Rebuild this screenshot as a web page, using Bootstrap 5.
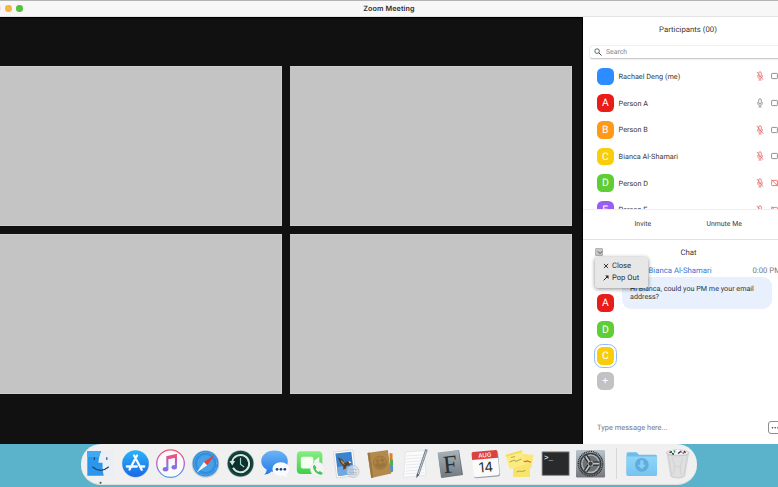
<!DOCTYPE html>
<html lang="en">
<head>
<meta charset="utf-8">
<meta name="viewport" content="width=device-width, initial-scale=1">
<title>Zoom Meeting</title>
<link href="https://cdn.jsdelivr.net/npm/bootstrap@5.3.0/dist/css/bootstrap.min.css" rel="stylesheet">
<style>
body{width:778px;height:487px;background:#5ab3cb;font-family:Roboto,"Liberation Sans",sans-serif;font-size:7.3px;line-height:9px;color:#3a3a3a;text-rendering:geometricPrecision}
svg{display:block;flex:none}
.title-bar{height:17px;background:#f7f7f7;border-top:1px solid #b4b4b4;border-bottom:1px solid #e4e4e4;font:600 7.2px/15px Inter,sans-serif;letter-spacing:.1px;color:#2d2d2d}
.dots{left:-6px;top:4px;gap:4.4px}
.dots span{width:6.6px;height:6.6px;border-radius:50%}
.window-body{height:426.5px}
.stage{width:583px;background:#111;border-top:1px solid #000;border-right:1px solid #000;padding:48px 10px 49px 0;display:grid;grid-template:160px 160px/282px 282px;gap:8px}
.stage div{background:#c4c4c4;border:1px solid #cecece;border-left:0}
.side{width:195px;background:#fff}
.people-head{height:28px;padding-top:8px;padding-left:15px;font-size:7.8px}
.search{height:14px;width:200px;margin:0 0 4px 6px;padding-left:4px;gap:4px;border-radius:4px;border:1px solid #f0f0f0;border-bottom-color:#ccc;box-shadow:0 1px 1px #0001;color:#888;font-size:6.9px}
.people{height:146.5px;border-bottom:1px solid #eee}
.person{height:26.7px;padding-left:13.5px;width:204px}
.person .who{width:142px;padding-left:4.5px}
.person .ms-2{margin-left:7px!important}
.ava{width:17.6px;height:17.6px;border-radius:5.5px;color:#fff;font-size:10.4px;line-height:18px;text-align:center;flex:none}
.c-blue{background:#2d8cff}.c-red{background:#e91c18}.c-orange{background:#ff9a16}.c-yellow{background:#f8ce0c}.c-green{background:#5fce35}.c-violet{background:#9b5cf6}.c-gray{background:#c2c2c2}
.muted{color:#e2605f}.live{color:#777}
.actions{height:30px;border-bottom:1px solid #e2e2e2;font-size:6.9px;padding-top:1px}
.actions .invite{margin-left:51.5px;width:72px}
.chat-head{height:25px;padding-left:11.5px;font-size:7.8px}
.toggle{width:8.5px;height:8px;background:#c9c9c9;border-radius:1px;border:.5px solid #b2b2b2}
.menu-pop{left:12px;top:17px;width:53px;height:31px;background:#e7e7e7;border-radius:3px;box-shadow:0 1px 4px #0007;padding:3px 0 0 8px;font-size:7.6px;line-height:12.4px;color:#2f2f2f;z-index:3}
.menu-pop div{gap:3px}
.contacts{width:35px;padding-left:13.5px;padding-top:29.5px}
.contacts .ava{margin-bottom:9.1px}
.ring{outline:1.2px solid #8fbcf5;outline-offset:2px}
.contacts .ring{margin-bottom:7px}
.thread{width:164px;padding-left:4px}
.from{height:12px;font-size:7.75px;line-height:12px;white-space:nowrap}
.from .sender{width:26.5px}
.from .name{color:#3873cf;width:104px}
.from .time{color:#777}
.bubble{width:150px;height:32px;background:#e8f0fd;border-radius:9px;padding:8px 0 0 8px;font-size:7.2px;line-height:8.4px;color:#30353b;white-space:nowrap}
.thread-area{height:149px}
.compose{height:28px;padding-left:14px;font-size:7.4px;letter-spacing:.04px;color:#777683}
.more{width:14px;height:13px;border:1px solid #8c8c8c;border-radius:3px;margin-right:-4px;line-height:12px;color:#333}
.dock{width:616px;height:41px;margin-left:81px;padding-left:1.5px;border-radius:20px;background:#f0f0f0;border-bottom:.5px solid #ddd}
.dock svg{width:35.07px;height:41px}
.dock .gap-line{width:16px;padding:4px 0 5px 8px}
.gap-line i{display:block;width:1px;height:31px;background:#d8d8d8}
</style>
<script src="https://cdn.jsdelivr.net/npm/bootstrap@5.3.0/dist/js/bootstrap.bundle.min.js"></script>
</head>
<body class="overflow-hidden m-0">
<svg width="0" height="0" class="position-absolute">
<defs>
<symbol id="mic" viewBox="0 0 8 10"><rect x="2.7" y=".8" width="2.6" height="5" rx="1.3" fill="none" stroke="currentColor" stroke-width=".75"/><path d="M1.5 4.2v.7a2.5 2.5 0 0 0 5 0v-.7M4 7.4v1.7M2.5 9.1h3" fill="none" stroke="currentColor" stroke-width=".65"/></symbol>
<symbol id="mute" viewBox="0 0 8 10"><use href="#mic"/><path d="M.9.9l6.2 7.8" stroke="currentColor" stroke-width=".75"/></symbol>
<symbol id="cam" viewBox="0 0 9 8"><rect x=".6" y="1.4" width="5.8" height="5.2" rx=".7" fill="none" stroke="currentColor" stroke-width=".8"/></symbol>
<symbol id="nocam" viewBox="0 0 9 8"><use href="#cam"/><path d="M.5.8l6.5 6.4M6.5 3l2-1.2v4.4l-2-1.2" fill="none" stroke="currentColor" stroke-width=".8"/></symbol>
<linearGradient id="gBlue" x2="0" y2="1"><stop stop-color="#28b4f8"/><stop offset="1" stop-color="#1b68e5"/></linearGradient>
<linearGradient id="gMsg" x2="0" y2="1"><stop stop-color="#6bb5f7"/><stop offset="1" stop-color="#2679e4"/></linearGradient>
<linearGradient id="gPink" x2="0" y2="1"><stop stop-color="#f3536b"/><stop offset=".5" stop-color="#b05fd9"/><stop offset="1" stop-color="#4ba4ec"/></linearGradient>
<linearGradient id="gGreen" x2="0" y2="1"><stop stop-color="#86ee83"/><stop offset="1" stop-color="#40cf49"/></linearGradient>
<linearGradient id="gSteel" x2="0" y2="1"><stop stop-color="#a9b3b9"/><stop offset="1" stop-color="#707a80"/></linearGradient>
<linearGradient id="gPref" x2="0" y2="1"><stop stop-color="#b8c4ce"/><stop offset="1" stop-color="#75787b"/></linearGradient>
<linearGradient id="gFold" x2="0" y2="1"><stop stop-color="#8fd5f9"/><stop offset="1" stop-color="#77c3f0"/></linearGradient>
</defs>
</svg>

<header class="title-bar position-relative text-center">
  <div class="dots position-absolute d-flex"><span style="background:#f6dcdc"></span><span style="background:#f4b63f"></span><span style="background:#55c13f"></span></div>
  Zoom Meeting
</header>

<main class="window-body d-flex">
  <section class="stage flex-shrink-0"><div></div><div></div><div></div><div></div></section>
  <aside class="side overflow-hidden">
    <div class="people-head text-center">Participants (00)</div>
    <div class="search d-flex align-items-center"><svg width="8" height="8" viewBox="0 0 8 8"><circle cx="3.1" cy="3.1" r="2.3" fill="none" stroke="#444" stroke-width=".8"/><path d="M4.8 4.8l2.7 2.7" stroke="#444" stroke-width="1"/></svg>Search</div>
    <div class="people overflow-hidden">
      <div class="person d-flex align-items-center"><span class="ava c-blue"></span><span class="who">Rachael Deng (me)</span><svg class="muted" width="8" height="10"><use href="#mute"/></svg><svg class="live ms-2" width="9" height="8"><use href="#cam"/></svg></div>
      <div class="person d-flex align-items-center"><span class="ava c-red">A</span><span class="who">Person A</span><svg class="live" width="8" height="10"><use href="#mic"/></svg><svg class="live ms-2" width="9" height="8"><use href="#cam"/></svg></div>
      <div class="person d-flex align-items-center"><span class="ava c-orange">B</span><span class="who">Person B</span><svg class="muted" width="8" height="10"><use href="#mute"/></svg><svg class="live ms-2" width="9" height="8"><use href="#cam"/></svg></div>
      <div class="person d-flex align-items-center"><span class="ava c-yellow">C</span><span class="who">Bianca Al-Shamari</span><svg class="muted" width="8" height="10"><use href="#mute"/></svg><svg class="live ms-2" width="9" height="8"><use href="#cam"/></svg></div>
      <div class="person d-flex align-items-center"><span class="ava c-green">D</span><span class="who">Person D</span><svg class="muted" width="8" height="10"><use href="#mute"/></svg><svg class="muted ms-2" width="9" height="8"><use href="#nocam"/></svg></div>
      <div class="person d-flex align-items-center"><span class="ava c-violet">E</span><span class="who">Person E</span><svg class="muted" width="8" height="10"><use href="#mute"/></svg><svg class="muted ms-2" width="9" height="8"><use href="#nocam"/></svg></div>
    </div>
    <div class="actions d-flex align-items-center"><span class="invite">Invite</span><span>Unmute Me</span></div>
    <div class="position-relative">
      <div class="chat-head d-flex align-items-center"><span class="toggle"><svg width="8" height="7" viewBox="0 0 8 7"><path d="M1.8 2.3L4 4.6l2.2-2.3" fill="none" stroke="#444" stroke-width=".9"/></svg></span><span style="margin-left:77.5px">Chat</span></div>
      <div class="menu-pop position-absolute">
        <div class="d-flex align-items-center"><svg width="6" height="6" viewBox="0 0 6 6"><path d="M.9.9l4.2 4.2M5.1.9L.9 5.1" stroke="#222" stroke-width=".9"/></svg>Close</div>
        <div class="d-flex align-items-center"><svg width="6" height="6" viewBox="0 0 6 6"><path d="M.7 5.3l3.5-3.5" stroke="#222"/><path d="M2.2.6h3.3v3.3z" fill="#222"/></svg>Pop Out</div>
      </div>
      <div class="thread-area d-flex">
        <div class="contacts flex-shrink-0">
          <div class="ava c-red">A</div><div class="ava c-green">D</div><div class="ava c-yellow ring">C</div><div class="ava c-gray">+</div>
        </div>
        <div class="thread flex-shrink-0">
          <div class="from d-flex"><span class="sender flex-shrink-0"></span><span class="name flex-shrink-0">Bianca Al-Shamari</span><span class="time">0:00 PM</span></div>
          <div class="bubble">Hi Bianca, could you PM me your email<br>address?</div>
        </div>
      </div>
    </div>
    <div class="compose d-flex align-items-center justify-content-between"><span>Type message here...</span><span class="more"><svg width="12" height="11" viewBox="0 0 12 11"><g fill="#444"><circle cx="3.5" cy="5.8" r=".8"/><circle cx="6.2" cy="5.8" r=".8"/><circle cx="8.9" cy="5.8" r=".8"/></g></svg></span></div>
  </aside>
</main>

<footer class="dock d-flex">
  <svg viewBox="0 0 35 41"><path d="M4.3 7h26.4v24.8H4.3z" fill="#e9eff5"/><path d="M4.3 7h13.9c-2 4-2.6 8-2.7 11.8h4c-.1 5 .3 9 1.2 13H4.3z" fill="#2b96ee"/><path d="M4.3 7h13.9c-1 2-1.6 4-2 6H4.3z" fill="#3fa9f5"/><path d="M11.3 13.5v2M23.8 13.5v2M9.5 23c5 4.2 11 4.2 16 0" stroke="#24435f" stroke-width="1.1" stroke-linecap="round" fill="none"/><circle cx="17.5" cy="38.7" r="1" fill="#444"/></svg>
  <svg viewBox="0 0 35 41"><circle cx="17.5" cy="20.2" r="13.5" fill="#ccd3da"/><circle cx="17.5" cy="19.6" r="13.3" fill="url(#gBlue)"/><path d="M19 11.5l-7.5 14M16 11.5l7.7 14.3M8.8 22.5h10M22.5 22.5h3.7" stroke="#f4faff" stroke-width="2.3" stroke-linecap="round"/></svg>
  <svg viewBox="0 0 35 41"><circle cx="17.5" cy="19.6" r="13.8" fill="#fafafa" stroke="url(#gPink)" stroke-width="1.3"/><path d="M14.3 24.8V13l8.6-2v11.8M14.3 14.5l8.6-2" fill="none" stroke="url(#gPink)" stroke-width="2.1"/><ellipse cx="12.5" cy="25.2" rx="2.8" ry="2.2" fill="#8a70df"/><ellipse cx="21.2" cy="23.2" rx="2.7" ry="2.2" fill="#8a70df"/></svg>
  <svg viewBox="0 0 35 41"><circle cx="17.5" cy="20" r="13.8" fill="#c7cdd2"/><circle cx="17.5" cy="19.6" r="12.9" fill="#2f8ee0"/><circle cx="17.5" cy="19.6" r="11.3" fill="none" stroke="#8cc6f2" stroke-width="1.1" stroke-dasharray=".35 .8"/><circle cx="17.5" cy="19.6" r="8.5" fill="#4aa0e4"/><path d="M26.6 10.8L19.2 21.3l-3.4-3.4z" fill="#ea4038"/><path d="M8.5 28.7l7.3-10.8 3.4 3.4z" fill="#f2f4f5"/></svg>
  <svg viewBox="0 0 35 41"><circle cx="17.5" cy="19.6" r="13.6" fill="#c1cac6"/><circle cx="17.5" cy="19.6" r="12.9" fill="#15453f"/><circle cx="17.5" cy="19.6" r="10.7" fill="#0b302e"/><path d="M9.2 17.5A8.6 8.6 0 1 1 10 23.8" fill="none" stroke="#d7e8e3" stroke-width="1.9"/><path d="M6.4 17h5.7l-2.9 4.6z" fill="#d7e8e3"/><path d="M17.5 13.8v6.4l3.6 2.8" fill="none" stroke="#a9d0c8" stroke-width="1.2"/></svg>
  <svg viewBox="0 0 35 41"><path d="M16.5 6.5c8 0 13.3 4.8 13.3 10.7s-5.3 10.6-13.3 10.6c-1 0-2-.1-3-.3-2 1.9-4.5 3.2-7.3 3.1 1.6-1.4 2.4-3.2 2.4-5C5.2 23.8 3.2 20.8 3.2 17.2 3.2 11.3 8.5 6.5 16.5 6.5z" fill="url(#gMsg)"/><path d="M22.800 18.300c5 0 8.200 3 8.200 6.800 0 2.300-1 4-2.700 5.200.1 1.200.7 2.200 1.600 3-1.800 0-3.400-.7-4.500-1.700-5.900 1.200-10.900-2-10.900-6.500 0-3.800 3.300-6.800 8.300-6.800z" fill="#f9fbff"/><g fill="#20447c"><circle cx="19" cy="25.3" r="1.35"/><circle cx="22.9" cy="25.3" r="1.35"/><circle cx="26.8" cy="25.3" r="1.35"/></g></svg>
  <svg viewBox="0 0 35 41"><rect x="3.8" y="7.2" width="25.5" height="22.8" rx="4" fill="url(#gGreen)"/><rect x="7.8" y="12.8" width="12.6" height="11.7" rx="2" fill="#f7fff5"/><path d="M21.2 16.8l5-4v11.5l-5-3.8z" fill="#f7fff5"/><circle cx="24.6" cy="25.3" r="7.3" fill="#f4f4f4" stroke="#d6ded5" stroke-width=".4"/><path d="M21.5 20.8l2 3-1 1.2c.8 1.5 1.7 2.4 3 3l1.2-1 3 2c-.7 1.8-2 2-4 1.2-3-1.3-5.2-3.9-5.7-6.8-.1-1 .5-2.1 1.500-2.600z" fill="#43c454"/></svg>
  <svg viewBox="0 0 35 41"><g transform="rotate(-7 17 20)"><path d="M7 6.800h19.500v26H7z" fill="#fbfbfb" stroke="#cbd0d4" stroke-width=".7"/><path d="M8.700 8.500h16v22.500h-16z" fill="#3983cf"/><path d="M8.700 22h16v9h-16z" fill="#71a9dc"/><path d="M10.500 12.500l4 2.500 2.500 4 3.500-1.500 4 2-3 .8.5 1.700-3.500 0-1.500 2.500-2.500 1 .5-3.500-2.500-3.500z" fill="#5e402a"/><path d="M13 15l3 3 .5 3-2.500-2.500z" fill="#b59363"/><path d="M20.500 17.500l3.500 1.500-2.500.8z" fill="#fff"/></g><circle cx="25" cy="27.500" r="6" fill="#d8dfe6" fill-opacity=".65" stroke="#b3c0cb" stroke-width=".7"/><path d="M21 25c2 2 5-1 8 1M21 28c2 2 5-1 8 1M22 30.500c2 1 4-1 6 0" fill="none" stroke="#9dafc0" stroke-width=".7"/></svg>
  <svg viewBox="0 0 35 41"><path d="M26.500 9l3 .5v6l-3 1z" fill="#df7d2e"/><path d="M27 15l3 .5v6L27 22z" fill="#5aab45"/><path d="M27 21l3 .5v6L27 29z" fill="#4592d2"/><path d="M4.500 9L24.800 6l3.400 23.600L8.200 34z" fill="#b38a4d"/><path d="M4.500 9l2.300-.4 3.500 24.900-2.100.5z" fill="#9d763d"/><circle cx="17" cy="18.800" r="6.700" fill="#ac8245" stroke="#977238" stroke-width=".7"/><g fill="#9c753c"><circle cx="14.600" cy="16.800" r="1.600"/><circle cx="19.200" cy="16.300" r="1.700"/><path d="M12 21.500c.3-3 5-3.500 5.500-.5 1-3 5-2.800 5.300.2-2 3-8 4-10.800.3z"/></g></svg>
  <svg viewBox="0 0 35 41"><path d="M7.500 8L26 6.500 28 31 5.500 33.500z" fill="#fbfbfb" stroke="#dadada" stroke-width=".6"/><path d="M8.500 12l17-1.300M8.300 15l17.200-1.300M8.200 18l17.500-1.300M8 21l17.800-1.300M7.800 24l18.200-1.300M7.600 27l18.600-1.300M7.400 30l19-1.500" stroke="#d9dee4" stroke-width=".6"/><path d="M28.500 5.500L19.800 31" stroke="#68798a" stroke-width="2.400"/><path d="M28.300 6.500L20.200 30" stroke="#c9d6e2" stroke-width=".9"/><path d="M18.700 30l-.4 4.300 2.600-3.400z" fill="#4c5258"/></svg>
  <svg viewBox="0 0 35 41"><path d="M5 9.500L26 6l4 25-21.500 3z" fill="#6d777e"/><path d="M4.500 8.500L25.500 6l3 24.500L8 33.500z" fill="url(#gSteel)"/><g transform="rotate(-6 17 20)"><text x="10" y="28.500" font-family="Liberation Serif,serif" font-size="25" fill="#2a3034">F</text></g></svg>
  <svg viewBox="0 0 35 41"><g transform="rotate(-5 17 20)"><rect x="5" y="8.500" width="26" height="25" rx="2" fill="#9ca0a4"/><rect x="4.500" y="7.300" width="26" height="25" rx="2" fill="#fafafa"/><path d="M4.500 14.800v-6q0-1.700 1.700-1.700h22.600q1.700 0 1.700 1.700v6z" fill="#d94241"/><text x="17.500" y="13.300" text-anchor="middle" font-family="Inter,sans-serif" font-size="6" font-weight="500" fill="#fff">AUG</text><text x="17.700" y="28" text-anchor="middle" font-family="Inter,sans-serif" font-size="13.500" fill="#292929">14</text></g></svg>
  <svg viewBox="0 0 35 41"><path d="M16.500 9.500l14 1.500-2 13-13-1z" fill="#fae777"/><path d="M10 20h17v13H10z" fill="#f7e46d"/><path d="M2.500 11L18.800 6.200l3.800 14-16 5z" fill="#fbec82"/><path d="M2.500 11L18.800 6.200l.5 1.800L3 12.800z" fill="#f4dc56"/><path d="M8 13.500l4-1M6.500 18l5-2 1 1.500 6-2.500M13.500 28l3-1 2 .5 4-1" stroke="#a08f4a" fill="none" stroke-width=".8"/><path d="M20.500 17l2 .7 1.500-.8 4 1.300" stroke="#e5602d" fill="none" stroke-width="1.100"/></svg>
  <svg viewBox="0 0 35 41"><rect x="3.600" y="7.300" width="28" height="24.800" rx="1" fill="#919191"/><path d="M4.500 8.300h26.200v22.600H4.500z" fill="#282a2c"/><text x="6" y="15.800" font-family="Liberation Mono,monospace" font-weight="700" font-size="7.500" fill="#e5e5e5">&gt;_</text></svg>
  <svg viewBox="0 0 35 41"><rect x="3" y="6" width="29" height="27.500" rx="1.200" fill="url(#gPref)"/><circle cx="17.500" cy="19.700" r="12.200" fill="none" stroke="#303335" stroke-width="1.500" stroke-dasharray="1.100 .7"/><circle cx="17.500" cy="19.700" r="11" fill="#3b3e40"/><circle cx="17.500" cy="19.700" r="8.700" fill="#6d7174" stroke="#b1b4b6" stroke-width="1.500"/><path d="M17.500 19.700L12.500 12M17.500 19.700h9M17.500 19.700l-5 7.700" stroke="#292c2e" stroke-width="4.200"/><path d="M17.500 19.700L12.700 12.300M17.500 19.700h8.800M17.500 19.700l-4.800 7.400" stroke="#c1c4c5" stroke-width="1.700"/><circle cx="17.500" cy="19.700" r="2.600" fill="#3a3d3f" stroke="#b3b6b7"/></svg>
  <div class="gap-line flex-shrink-0"><i></i></div>
  <svg viewBox="0 0 35 41"><path d="M2.500 10q0-1.800 1.500-1.800h8.500l2.500 2.500h16.500q1.500 0 1.500 1.500V30q0 2-1.500 2H4q-1.500 0-1.500-2z" fill="#70bde9"/><path d="M2.500 12.500h30.500V30q0 1.700-1.500 1.700H4q-1.500 0-1.500-1.700z" fill="url(#gFold)"/><circle cx="17.800" cy="20.800" r="6.900" fill="#5eaddc"/><path d="M16.300 16.300h3v4.500h2.600l-4.100 4.500-4.100-4.500h2.600z" fill="#89cef4"/></svg>
  <svg viewBox="0 0 35 41"><path d="M6.500 8.500h22.500l-3.800 23q-.5 3-7.500 3t-7.500-3z" fill="#d2d3d4"/><path d="M9 12h17.500l-3.200 20q-2.500 1-5.600 1t-5.600-1z" fill="#dfdfe0"/><path d="M12 13l3 9-2 9M23 13l-3 10 1 8M15 22l5 1" stroke="#d0d2d3" stroke-width="1" fill="none"/><ellipse cx="17.700" cy="8.800" rx="11.200" ry="3" fill="#e6e6e6" stroke="#bbb" stroke-width=".7"/><path d="M9 8l3-2 3 1 3-2 3 2 4-1 2 3-4 1.500-5-1-4 1.300z" fill="#f8f8f8"/><g stroke-width="1.500"><path d="M9.500 8.500l2.500-.8M18 9.500l2-1.500M24 7l1.500 1.800M12 9.500l2 .8" stroke="#33363a"/><path d="M14 6.500l1 2" stroke="#249873"/><path d="M20 7l1.500 1.500" stroke="#743bb0"/><path d="M22.500 9.500l1.500-.8" stroke="#c83b3b"/></g></svg>
</footer>
</body>
</html>
